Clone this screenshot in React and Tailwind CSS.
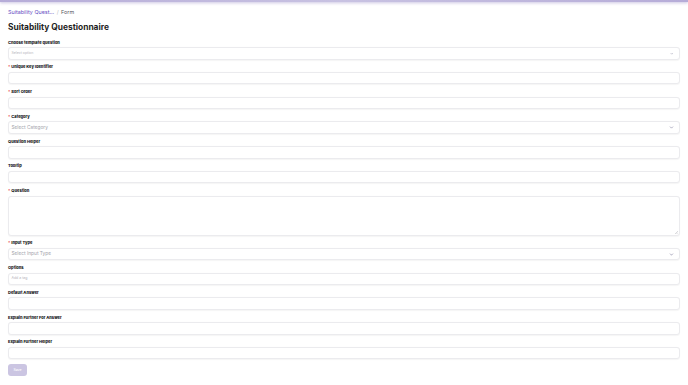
import { ChevronDown } from 'lucide-react';

const fields = [
    { label: 'Choose template question', kind: 'select-sm', placeholder: 'Select option' },
    { label: 'Unique Key Identifier', required: true },
    { label: 'Sort Order', required: true },
    { label: 'Category', required: true, kind: 'select', placeholder: 'Select Category' },
    { label: 'Question Helper' },
    { label: 'Tooltip' },
    { label: 'Question', required: true, kind: 'textarea' },
    { label: 'Input Type', required: true, kind: 'select', placeholder: 'Select Input Type' },
    { label: 'Options', kind: 'tags', placeholder: 'Add a tag' },
    { label: 'Default Answer' },
    { label: 'Explain Further For Answer' },
    { label: 'Explain Further Helper' },
];

const boxClass = 'w-full rounded-[3px] border border-[#ebebee] bg-white shadow-[0_0.5px_1px_rgba(0,0,0,0.04)]';

function Field({ field }) {
    return (
        <div className="mb-[4.75px]">
            <label className="mb-[2.5px] flex h-[5px] items-center text-[4px] font-extrabold leading-[5px] text-[#141418]">
                {field.required && <span className="mr-[1px] text-[#e5484d]">*</span>}
                {field.label}
            </label>
            {field.kind === 'textarea' ? (
                <div className={`${boxClass} relative h-[40px]`}>
                    <svg className="absolute bottom-[1px] right-[1px]" height="3" viewBox="0 0 3 3" width="3">
                        <path d="M3 0L0 3M3 1.5L1.5 3" stroke="#b5b5bb" strokeWidth="0.5" />
                    </svg>
                </div>
            ) : (
                <div className={`${boxClass} flex h-[12.5px] items-center justify-between px-[2.5px]`}>
                    <span className={field.kind === 'select' ? 'text-[4.8px] text-[#a3a3ab]' : 'text-[3.5px] text-[#b3b3ba]'}>{field.placeholder ?? ''}</span>
                    {field.kind === 'select' && <ChevronDown className="mr-[3px] text-[#6e6a8f]" size={5} strokeWidth={2.5} />}
                    {field.kind === 'select-sm' && <ChevronDown className="mr-[3.5px] text-[#8a87a3]" size={3.5} strokeWidth={3} />}
                </div>
            )}
        </div>
    );
}

export default function App() {
    return (
        <div className="min-h-[385px] bg-white font-['Inter','Noto_Sans',sans-serif]">
            <div className="h-[2px] bg-gradient-to-r from-[#b6acd8] via-[#c8c2e2] to-[#b6acd8] shadow-[0_1px_3px_rgba(120,100,180,0.45)]" />
            <div className="px-[8px]">
                <div className="mt-[6.5px] flex h-[6px] items-center gap-[2.5px] text-[5.4px] leading-[6px]">
                    <span className="text-[#6a51c4]">Suitability Quest...</span>
                    <span className="text-[#b8b8c0]">/</span>
                    <span className="text-[#55555e]">Form</span>
                </div>
                <h1 className="mt-[6.5px] flex h-[12px] items-center text-[8.4px] font-bold leading-[12px] text-[#1f1f24]">Suitability Questionnaire</h1>
                <form className="mt-[6.5px]">
                    {fields.map((field) => <Field field={field} key={field.label} />)}
                    <button className="block h-[12px] w-[19px] rounded-[3px] bg-[#cbc5e2] text-[3.5px] font-medium leading-[12px] text-white" type="button">Save</button>
                </form>
            </div>
        </div>
    );
}
